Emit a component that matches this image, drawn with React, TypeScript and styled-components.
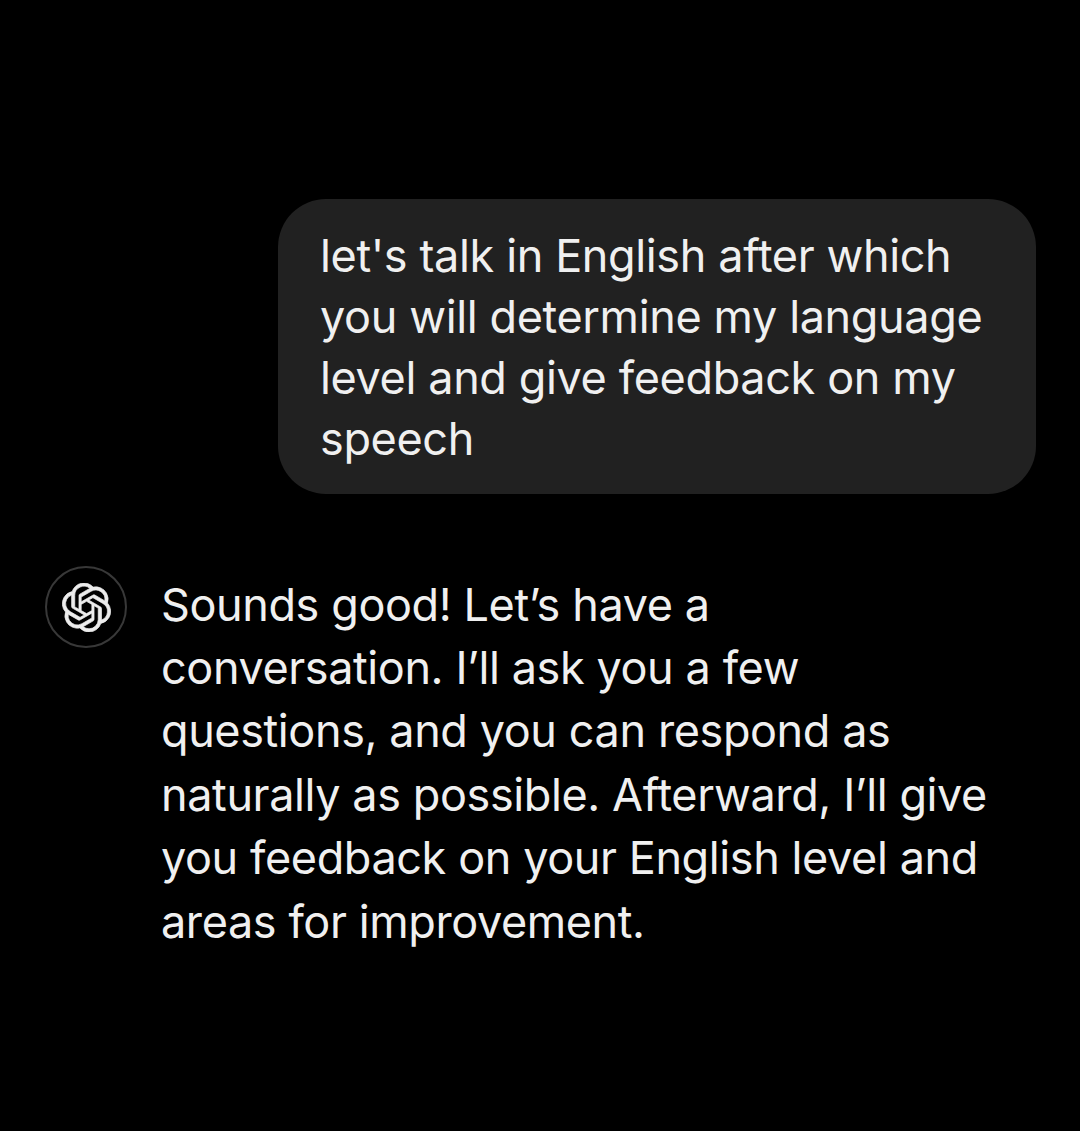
import styled, { createGlobalStyle } from "styled-components";

const GlobalStyle = createGlobalStyle`
  html, body {
    margin: 0;
    padding: 0;
    background: #000;
  }
`;

const Screen = styled.div`
  width: 1080px;
  height: 1131px;
  background: #000;
  box-sizing: border-box;
  padding: 199px 44px 0 45px;
  display: flex;
  flex-direction: column;
  font-family: "Inter", "Liberation Sans", sans-serif;
  color: #f0f0f0;
  overflow: hidden;
`;

const UserBubble = styled.div`
  align-self: flex-end;
  box-sizing: border-box;
  width: 758px;
  height: 295px;
  background: #212121;
  border-radius: 48px;
  padding: 26px 40px 0 42px;
  font-size: 45px;
  line-height: 61px;
  letter-spacing: -0.37px;
`;

const BotRow = styled.div`
  display: flex;
  gap: 34px;
  margin-top: 72px;
`;

const Avatar = styled.div`
  flex: none;
  box-sizing: border-box;
  width: 82px;
  height: 82px;
  border-radius: 50%;
  border: 2px solid #383838;
  display: flex;
  align-items: center;
  justify-content: center;
`;

const BotText = styled.div`
  font-size: 45px;
  line-height: 63.4px;
  letter-spacing: -0.4px;
  width: 860px;
  margin-top: 6.5px;
`;

function OpenAiLogo() {
  return (
    <svg
      width="49"
      height="49"
      viewBox="0 0 24 24"
      fill="#ececec"
      stroke="#ececec"
      strokeWidth="0.35"
    >
      <path d="M22.28 9.82a5.98 5.98 0 0 0-.52-4.91 6.05 6.05 0 0 0-6.51-2.9A6.07 6.07 0 0 0 4.98 4.18a5.98 5.98 0 0 0-4 2.9 6.05 6.05 0 0 0 .74 7.1 5.98 5.98 0 0 0 .51 4.91 6.05 6.05 0 0 0 6.52 2.9A5.98 5.98 0 0 0 13.26 24a6.06 6.06 0 0 0 5.77-4.21 5.99 5.99 0 0 0 4-2.9 6.06 6.06 0 0 0-.75-7.07zM13.26 22.43a4.48 4.48 0 0 1-2.88-1.04l.14-.08 4.78-2.76a.8.8 0 0 0 .39-.68v-6.74l2.02 1.17a.07.07 0 0 1 .04.05v5.58a4.5 4.5 0 0 1-4.49 4.5zM3.6 18.3a4.47 4.47 0 0 1-.53-3.01l.14.08 4.78 2.76a.77.77 0 0 0 .78 0l5.84-3.37v2.33a.08.08 0 0 1-.03.06L9.74 19.95a4.5 4.5 0 0 1-6.14-1.65zM2.34 7.9a4.49 4.49 0 0 1 2.37-1.97V11.6a.77.77 0 0 0 .39.68l5.81 3.35-2.02 1.17a.08.08 0 0 1-.07 0l-4.83-2.79A4.5 4.5 0 0 1 2.34 7.9zm16.6 3.86l-5.84-3.39 2.02-1.16a.08.08 0 0 1 .07 0l4.83 2.79a4.49 4.49 0 0 1-.68 8.1v-5.68a.79.79 0 0 0-.4-.66zm2.01-3.02l-.14-.09-4.77-2.78a.78.78 0 0 0-.79 0L9.41 9.23V6.9a.07.07 0 0 1 .03-.06l4.83-2.79a4.5 4.5 0 0 1 6.68 4.66zM8.31 12.86l-2.02-1.16a.08.08 0 0 1-.04-.06V6.07a4.5 4.5 0 0 1 7.38-3.45l-.14.08-4.78 2.76a.8.8 0 0 0-.39.68zm1.1-2.37l2.6-1.5 2.61 1.5v3l-2.6 1.5-2.61-1.5z" />
    </svg>
  );
}

export default function App() {
  return (
    <>
      <GlobalStyle />
      <Screen>
        <UserBubble>
          let's talk in English after which
          <br />
          you will determine my language
          <br />
          level and give feedback on my
          <br />
          speech
        </UserBubble>
        <BotRow>
          <Avatar>
            <OpenAiLogo />
          </Avatar>
          <BotText>
            Sounds good! Let’s have a
            <br />
            conversation. I’ll ask you a few
            <br />
            questions, and you can respond as
            <br />
            naturally as possible. Afterward, I’ll give
            <br />
            you feedback on your English level and
            <br />
            areas for improvement.
          </BotText>
        </BotRow>
      </Screen>
    </>
  );
}
